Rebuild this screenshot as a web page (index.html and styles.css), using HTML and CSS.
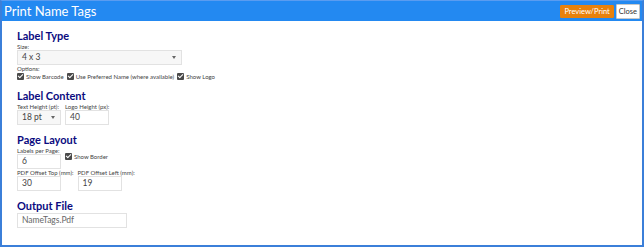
FILE: index.html
```html
<!DOCTYPE html>
<html lang="en">
<head>
    <meta charset="UTF-8">
    <title>Print Name Tags</title>
    <link rel="stylesheet" href="styles.css">
</head>
<body>
    <div class="dialog">
        <div class="title-bar">
            <span class="title">Print Name Tags</span>
            <div class="title-buttons">
                <button class="btn btn-primary">Preview/Print</button>
                <button class="btn btn-close">Close</button>
            </div>
        </div>

        <div class="content">
            <h2 class="first">Label Type</h2>
            <div class="field">
                <label>Size:</label>
                <div class="select wide">4 x 3</div>
            </div>
            <div class="field">
                <label>Options:</label>
                <div class="checks">
                    <span class="check"><span class="box"></span>Show Barcode</span>
                    <span class="check"><span class="box"></span>Use Preferred Name (where available)</span>
                    <span class="check"><span class="box"></span>Show Logo</span>
                </div>
            </div>

            <h2>Label Content</h2>
            <div class="row">
                <div class="field">
                    <label>Text Height (pt):</label>
                    <div class="select small">18 pt</div>
                </div>
                <div class="field">
                    <label>Logo Height (px):</label>
                    <div class="input small">40</div>
                </div>
            </div>

            <h2>Page Layout</h2>
            <div class="row">
                <div class="field">
                    <label>Labels per Page:</label>
                    <div class="input small">6</div>
                </div>
                <span class="check border-check"><span class="box"></span>Show Border</span>
            </div>
            <div class="row">
                <div class="field">
                    <label>PDF Offset Top (mm):</label>
                    <div class="input small">30</div>
                </div>
                <div class="field">
                    <label>PDF Offset Left (mm):</label>
                    <div class="input small">19</div>
                </div>
            </div>

            <h2>Output File</h2>
            <div class="input file">NameTags.Pdf</div>
        </div>
    </div>
</body>
</html>
```

FILE: styles.css
```css
body {
    margin: 0;
    padding: 0;
    background: #ffffff;
    font-family: 'Lato', 'Open Sans', sans-serif;
}

.dialog {
    width: 644px;
    height: 247px;
    box-sizing: border-box;
    border: 2px solid #3b7fd9;
    border-top: 1px solid #5a9cf0;
    background: #ffffff;
    overflow: hidden;
}

.title-bar {
    height: 20px;
    background: #2389f1;
    display: flex;
    align-items: center;
    justify-content: space-between;
    padding: 0 2px 0 2px;
}

.title {
    color: #ffffff;
    font-size: 13px;
    line-height: 20px;
}

.title-buttons {
    display: flex;
    align-items: center;
    gap: 2px;
}

.btn {
    font-family: inherit;
    font-size: 7.5px;
    padding: 0 3px;
    border: 1px solid transparent;
    border-radius: 1px;
}

.btn-primary {
    height: 13px;
    line-height: 11px;
    background: #e8810c;
    color: #ffffff;
    border-color: #e8810c;
}

.btn-close {
    height: 15px;
    line-height: 13px;
    padding: 0 2px;
    background: #ffffff;
    color: #333333;
    border-color: #c8c8c8;
}

.content {
    padding: 9px 15px 0;
}

h2 {
    color: #0a0a80;
    font-size: 11px;
    font-weight: 700;
    margin: 9px 0 1px;
    line-height: 12px;
}

h2.first {
    margin-top: 0;
}

.field {
    display: flex;
    flex-direction: column;
}

.field label {
    font-size: 6px;
    color: #444444;
    line-height: 7px;
    white-space: nowrap;
}

.select, .input {
    box-sizing: border-box;
    height: 15px;
    border: 1px solid #e2e2e2;
    font-size: 8.5px;
    color: #444444;
    line-height: 13px;
    padding: 0 4px;
    position: relative;
}

.select {
    background: #f7f7f7;
}

.select::after {
    content: '';
    position: absolute;
    right: 5px;
    top: 5px;
    border-left: 2px solid transparent;
    border-right: 2px solid transparent;
    border-top: 3px solid #666666;
}

.wide {
    width: 165px;
}

.small {
    width: 44px;
}

.input {
    background: #ffffff;
}

.file {
    width: 110px;
    color: #666666;
}

.checks {
    display: flex;
    gap: 3px;
    height: 8px;
    margin-bottom: 1px;
}

.check {
    display: flex;
    align-items: center;
    gap: 2px;
    font-size: 6px;
    color: #444444;
}

.box {
    width: 7px;
    height: 7px;
    background: #4a4a4a;
    border-radius: 1px;
    position: relative;
}

.box::after {
    content: '';
    position: absolute;
    left: 2px;
    top: 0px;
    width: 2px;
    height: 4px;
    border: solid #ffffff;
    border-width: 0 1px 1px 0;
    transform: rotate(45deg);
}

.row {
    display: flex;
    gap: 4px;
}

.border-check {
    align-self: flex-start;
    margin-top: 6px;
}
```
